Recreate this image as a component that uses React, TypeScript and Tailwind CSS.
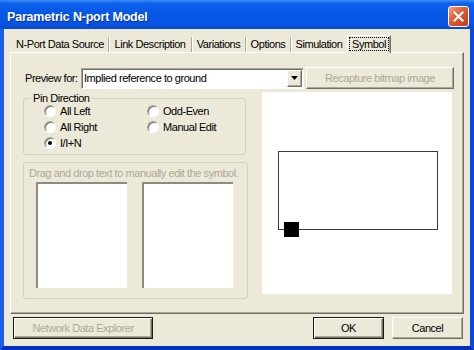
import React from 'react';

const raised =
    'border border-t-white border-l-white border-r-[#716F64] border-b-[#716F64] shadow-[inset_-1px_-1px_0_#ACA899]';
const framed =
    'border border-[#1a1a1a] shadow-[inset_1px_1px_0_#fff,inset_-1px_-1px_0_#716F64,inset_-2px_-2px_0_#ACA899]';
const sunken =
    'border border-t-[#ACA899] border-l-[#ACA899] border-r-white border-b-white shadow-[inset_1px_1px_0_#716F64]';

const tabs = [
    { label: 'N-Port Data Source', w: 'w-[97px]' },
    { label: 'Link Description', w: 'w-[83px]' },
    { label: 'Variations', w: 'w-[54px]' },
    { label: 'Options', w: 'w-[45px]' },
    { label: 'Simulation', w: 'w-[56px]', last: true },
];

const Radio = ({ label, checked = false }: { label: string; checked?: boolean }) => (
    <div className="flex items-center h-4">
        <span
            className={`w-[12px] h-[12px] rounded-full bg-white flex items-center justify-center ${sunken}`}
        >
            {checked && <span className="w-[4px] h-[4px] rounded-full bg-black" />}
        </span>
        <span className="ml-[4px]">{label}</span>
    </div>
);

const App: React.FC = () => {
    return (
        <div className="w-[474px] h-[350px] flex flex-col font-['Liberation_Sans',Arial,sans-serif] text-[11px] tracking-[-0.45px] text-black select-none">
            {/* Title bar */}
            <div className="h-[29px] flex items-start justify-between bg-[linear-gradient(to_bottom,#3C8CF6_0%,#0E61E9_12%,#0558E6_45%,#0554E2_80%,#0A4AD0_100%)]">
                <div className="pl-[7px] pt-[8px] text-white font-bold text-[12.5px] tracking-[-0.2px] [text-shadow:1px_1px_#0B2E9A]">
                    Parametric N-port Model
                </div>
                <div className="mt-[6px] mr-[5px] w-[21px] h-[21px] rounded-[3px] border border-white bg-[linear-gradient(135deg,#F4A384_0%,#E35E37_40%,#C63A16_100%)] flex items-center justify-center">
                    <svg width="11" height="11" viewBox="0 0 11 11">
                        <path d="M1.5 1.5 L9.5 9.5 M9.5 1.5 L1.5 9.5" stroke="#fff" strokeWidth="2.2" strokeLinecap="square" />
                    </svg>
                </div>
            </div>

            {/* Window body */}
            <div className="flex-1 flex flex-col bg-[#ECE9D8] border-l-4 border-r-4 border-b-4 border-l-[#1A5EEA] border-r-[#0A48D6] border-b-[#0030BE]">
                {/* Tabs */}
                <div className="flex h-[17px] mt-[6px] ml-[8px] relative z-10">
                    {tabs.map((t) => (
                        <div key={t.label} className={`${t.w} h-[17px] flex items-end`}>
                            <div
                                className={`h-[15px] w-full flex items-center justify-center ${
                                    t.last ? '' : 'border-r border-[#ACA899] shadow-[1px_0_0_#fff]'
                                }`}
                            >
                                {t.label}
                            </div>
                        </div>
                    ))}
                    <div className="w-[44px] h-[18px] bg-[#ECE9D8] border-t border-l border-t-white border-l-white border-r border-r-[#716F64] shadow-[inset_-1px_0_0_#ACA899] px-[1px] pt-[1px] pb-[2px]">
                        <div className="h-full flex items-center justify-center outline outline-1 outline-dotted outline-black -outline-offset-1">
                            Symbol
                        </div>
                    </div>
                </div>

                {/* Tab panel */}
                <div className={`ml-[6px] w-[454px] h-[262px] pt-[14px] pl-[12px] ${raised}`}>
                    <div className="flex items-center h-[22px]">
                        <div className="w-[58px] pl-[2px]">Preview for:</div>
                        <div className={`w-[223px] h-[21px] bg-white flex items-center ${sunken}`}>
                            <span className="flex-1 pl-[2px]">Implied reference to ground</span>
                            <div className={`w-[15px] h-[17px] mr-px bg-[#ECE9D8] flex items-center justify-center ${raised}`}>
                                <svg width="7" height="4" viewBox="0 0 7 4">
                                    <path d="M0 0 H7 L3.5 4 Z" fill="#000" />
                                </svg>
                            </div>
                        </div>
                        <div className={`ml-[2px] w-[148px] h-[22px] flex items-center justify-center text-[#ACA899] ${raised}`}>
                            Recapture bitmap image
                        </div>
                    </div>

                    <div className="flex mt-[3px]">
                        <div className="w-[225px] flex flex-col">
                            <fieldset className="w-[223px] h-[63px] border border-[#D0D0BF] rounded-[3px] px-[7px] pb-[2px]">
                                <legend className="px-[2px] leading-[13px]">Pin Direction</legend>
                                <div className="grid grid-cols-[103px_1fr] pl-[13px] -mt-[2px]">
                                    <div>
                                        <Radio label="All Left" />
                                        <Radio label="All Right" />
                                        <Radio label="I/I+N" checked />
                                    </div>
                                    <div>
                                        <Radio label="Odd-Even" />
                                        <Radio label="Manual Edit" />
                                    </div>
                                </div>
                            </fieldset>

                            <div className="mt-[7px] w-[225px] h-[137px] border border-[#D0D0BF] rounded-[3px] pt-[4px]">
                                <div className="pl-[5px] leading-[13px] text-[#ACA899]">
                                    Drag and drop text to manually edit the symbol.
                                </div>
                                <div className="flex gap-[15px] pl-[12px] mt-[2px]">
                                    <div className="w-[91px] h-[106px] bg-white border-t-2 border-l-2 border-t-[#8D8B7F] border-l-[#8D8B7F]" />
                                    <div className="w-[91px] h-[106px] bg-white border-t-2 border-l-2 border-t-[#8D8B7F] border-l-[#8D8B7F]" />
                                </div>
                            </div>
                        </div>

                        <div className="ml-[14px] w-[190px] h-[202px] bg-white">
                            <svg width="190" height="202" viewBox="0 0 190 202">
                                <rect x="16.5" y="59.5" width="159" height="78" fill="none" stroke="#3a3a3a" strokeWidth="1" />
                                <rect x="22" y="130" width="15" height="15" fill="#000" />
                            </svg>
                        </div>
                    </div>
                </div>

                {/* Bottom buttons */}
                <div className="flex mt-[3px] pl-[9px] pr-[7px]">
                    <div className={`w-[140px] h-[22px] flex items-center justify-center text-[#ACA899] ${framed}`}>
                        Network Data Explorer
                    </div>
                    <div className={`ml-auto w-[71px] h-[22px] flex items-center justify-center ${framed}`}>
                        OK
                    </div>
                    <div className={`ml-[8px] w-[71px] h-[22px] flex items-center justify-center ${raised}`}>
                        Cancel
                    </div>
                </div>
            </div>
        </div>
    );
};

export default App;
